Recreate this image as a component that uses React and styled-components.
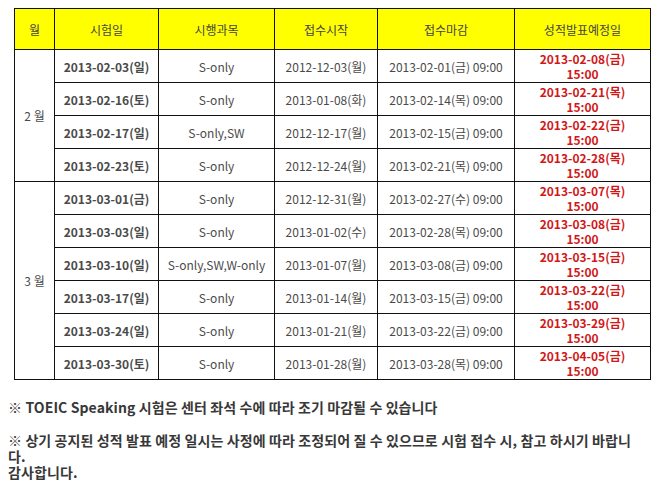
import React from 'react'
import styled, {createGlobalStyle} from 'styled-components'

const GlobalStyle = createGlobalStyle`
  body {
    margin: 8px;
    background: #ffffff;
    font-family: "Noto Sans CJK KR", "Noto Sans", sans-serif;
  }
`

const Page = styled.div`
  width: 653px;
`

const Table = styled.table`
  border-collapse: collapse;
  table-layout: fixed;
  width: 636px;
  margin-left: 6px;
  font-size: 12px;
  color: #4a4a4a;
`

const HeadCell = styled.th`
  height: 40px;
  padding: 0;
  background: #ffff00;
  border: 1px solid #111;
  font-weight: normal;
  color: #444;
  text-align: center;
`

const Cell = styled.td`
  height: 32px;
  padding: 0;
  border: 1px solid #111;
  text-align: center;
  line-height: 15px;
  font-weight: ${p => (p.bold ? 'bold' : 'normal')};
  color: ${p => (p.red ? '#d01818' : '#4a4a4a')};
`

const Notes = styled.div`
  width: 636px;
  margin-top: 19px;
  font-size: 14px;
  font-weight: bold;
  letter-spacing: 0.1px;
  color: #383838;
  line-height: 16px;
`

const Note = styled.p`
  margin: 0 0 ${p => (p.last ? '0' : '17px')};
`

const widths = [40, 104, 116, 103, 137, 136]
const heads = ['월', '시험일', '시행과목', '접수시작', '접수마감', '성적발표예정일']

const rows = [
  ['2013-02-03(일)', 'S-only', '2012-12-03(월)', '2013-02-01(금) 09:00', '2013-02-08(금)'],
  ['2013-02-16(토)', 'S-only', '2013-01-08(화)', '2013-02-14(목) 09:00', '2013-02-21(목)'],
  ['2013-02-17(일)', 'S-only,SW', '2012-12-17(월)', '2013-02-15(금) 09:00', '2013-02-22(금)'],
  ['2013-02-23(토)', 'S-only', '2012-12-24(월)', '2013-02-21(목) 09:00', '2013-02-28(목)'],
  ['2013-03-01(금)', 'S-only', '2012-12-31(월)', '2013-02-27(수) 09:00', '2013-03-07(목)'],
  ['2013-03-03(일)', 'S-only', '2013-01-02(수)', '2013-02-28(목) 09:00', '2013-03-08(금)'],
  ['2013-03-10(일)', 'S-only,SW,W-only', '2013-01-07(월)', '2013-03-08(금) 09:00', '2013-03-15(금)'],
  ['2013-03-17(일)', 'S-only', '2013-01-14(월)', '2013-03-15(금) 09:00', '2013-03-22(금)'],
  ['2013-03-24(일)', 'S-only', '2013-01-21(월)', '2013-03-22(금) 09:00', '2013-03-29(금)'],
  ['2013-03-30(토)', 'S-only', '2013-01-28(월)', '2013-03-28(목) 09:00', '2013-04-05(금)'],
]

function App () {
  return (
    <Page>
      <GlobalStyle />
      <Table>
        <colgroup>
          {widths.map((w, i) => <col key={i} style={{width: w}} />)}
        </colgroup>
        <thead>
          <tr>{heads.map(h => <HeadCell key={h}>{h}</HeadCell>)}</tr>
        </thead>
        <tbody>
          {rows.map((r, i) => (
            <tr key={i}>
              {i === 0 && <Cell rowSpan={4}>2 월</Cell>}
              {i === 4 && <Cell rowSpan={6}>3 월</Cell>}
              <Cell bold>{r[0]}</Cell>
              <Cell>{r[1]}</Cell>
              <Cell>{r[2]}</Cell>
              <Cell>{r[3]}</Cell>
              <Cell bold red>{r[4]}<br />15:00</Cell>
            </tr>
          ))}
        </tbody>
      </Table>
      <Notes>
        <Note>※ TOEIC Speaking 시험은 센터 좌석 수에 따라 조기 마감될 수 있습니다</Note>
        <Note last>※ 상기 공지된 성적 발표 예정 일시는 사정에 따라 조정되어 질 수 있으므로 시험 접수 시, 참고 하시기 바랍니다.</Note>
        <Note>감사합니다.</Note>
      </Notes>
    </Page>
  )
}

export default App
